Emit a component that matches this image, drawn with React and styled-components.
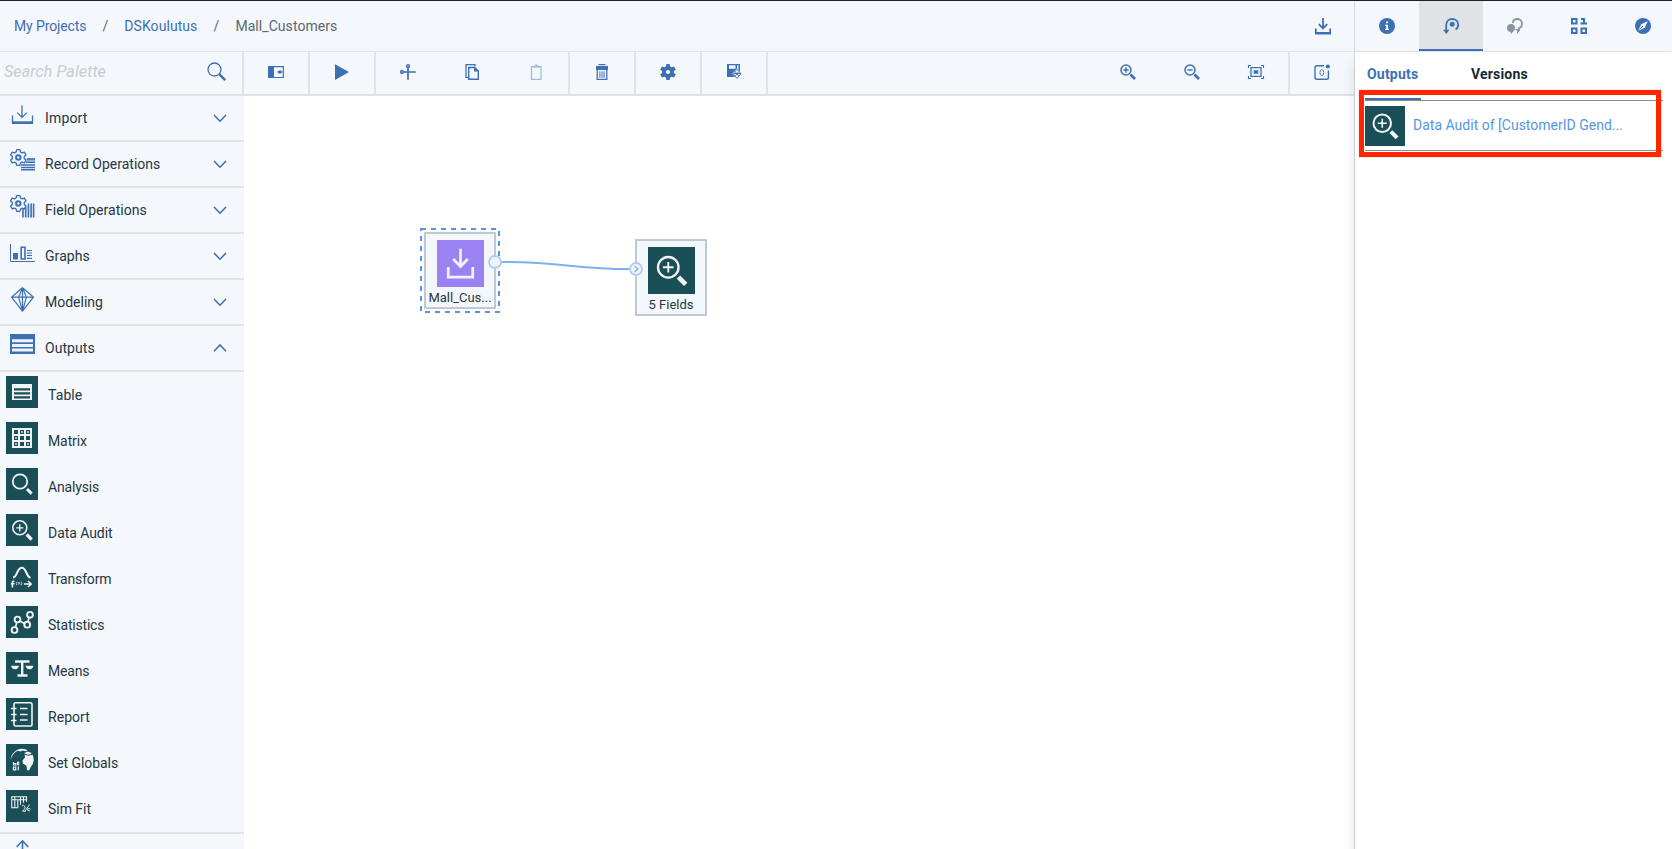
import React from "react";
import styled, { createGlobalStyle } from "styled-components";

const c = {
  blue: "#3d70b2",
  bg: "#f4f7fb",
  line: "#dfe3e6",
  teal: "#1a4f57",
  ink: "#152935",
  text: "#253741",
};

const Global = createGlobalStyle`
  * { box-sizing: border-box; }
  body { margin: 0; overflow: hidden; background: #fff; font-family: Roboto, "Liberation Sans", sans-serif; color: ${c.text}; }
`;
const Page = styled.div`display: flex; width: 1672px; height: 849px; border-top: 1px solid #152434; overflow: hidden;`;
const Main = styled.div`flex: 1; min-width: 0; display: flex; flex-direction: column;`;
const Header = styled.header`
  height: 51px; flex: none; display: flex; align-items: center; justify-content: space-between;
  background: ${c.bg}; border-bottom: 1px solid #dfe2e6; padding: 0 22px 0 14px;
`;
const Crumbs = styled.nav`display: flex; align-items: center; padding-bottom: 1px;`;
const Crumb = styled.span`font-size: 14px; line-height: 20px; color: ${(p) => (p.$link ? c.blue : "#5a6872")}; letter-spacing: ${(p) => p.$ls}px;`;
const Slash = styled.span`font-size: 14px; line-height: 20px; color: #5a6872; width: 38px; text-align: center;`;
const Body = styled.div`flex: 1; display: flex; min-height: 0;`;
const Side = styled.aside`width: 244px; flex: none; background: ${c.bg}; overflow: hidden;`;
const Search = styled.div`
  height: 44px; border-right: 2px solid ${c.line}; border-bottom: 2px solid ${c.line};
  display: flex; align-items: center; justify-content: space-between; padding: 0 15px 4px 4px;
`;
const SearchText = styled.span`
  font-size: 16px; line-height: 20px; font-style: italic; letter-spacing: 0.13px; color: #c8cccf; padding-top: 1px;
`;
const Category = styled.div`
  height: 46px; border-bottom: 2px solid ${c.line}; display: flex; align-items: center; padding: 0 15px 0 10px;
  svg:first-child { margin: -4px 9px 0 0; }
`;
const Name = styled.span`flex: 1; font-size: 14px; line-height: 20px; letter-spacing: ${(p) => p.$ls}px; white-space: nowrap;`;
const Items = styled.div`border-bottom: 2px solid ${c.line};`;
const Item = styled.div`
  height: 46px; display: flex; align-items: center; padding-left: 6px;
  svg { margin: -6px 10px 0 0; }
`;
const Work = styled.div`flex: 1; display: flex; flex-direction: column; min-width: 0;`;
const Toolbar = styled.div`height: 44px; flex: none; display: flex; background: ${c.bg}; border-bottom: 2px solid ${c.line};`;
const Tool = styled.div`
  width: ${(p) => (p.$div ? 66 : 64)}px; display: flex; align-items: center; justify-content: center;
  border-right: ${(p) => (p.$div ? `2px solid ${c.line}` : "0")}; padding-bottom: 2px;
`;
const Spacer = styled.div`flex: 1;`;
const Canvas = styled.div`flex: 1; position: relative; background: #fff;`;
const Node = styled.div`
  position: absolute; left: ${(p) => p.$x}px; top: ${(p) => p.$y}px; width: 72px; height: 77px;
  border: 2px solid #c0c9d1; background: ${c.bg}; display: flex; flex-direction: column; align-items: center; padding-top: 6px;
`;
const NodeLabel = styled.span`font-size: 13px; line-height: 18px; margin-top: 2px; white-space: nowrap;`;
const Overlay = styled.svg`position: absolute; left: 0; top: 0;`;
const Panel = styled.aside`
  width: 318px; flex: none; background: #fff; border-left: 1px solid #d5d9dd; position: relative;
  display: flex; flex-direction: column;
`;
const PanelBody = styled.div`flex: 1; background: #fff; box-shadow: -2px 10px 13px rgba(0, 20, 20, 0.09);`;
const Tabs = styled.div`display: flex; width: 320px; height: 51px; flex: none; background: ${c.bg}; border-bottom: 1px solid #dfe2e6;`;
const Tab = styled.div`
  width: 64px; height: 50px; display: flex; align-items: center; justify-content: center; padding-top: 2px;
  background: ${(p) => (p.$on ? "#dfe3e6" : "transparent")}; border-bottom: 2px solid ${(p) => (p.$on ? c.blue : "transparent")};
`;
const SubTabs = styled.div`display: flex; height: 48px; padding-left: 10px; gap: 48px;`;
const SubTab = styled.div`
  width: 56px; padding: 12px 0 0 2px; font-size: 14px; line-height: 20px; font-weight: 700; letter-spacing: ${(p) => p.$ls}px;
  white-space: nowrap;
  color: ${(p) => (p.$on ? c.blue : c.ink)}; border-bottom: 2px solid ${(p) => (p.$on ? c.blue : "transparent")};
`;
const Result = styled.div`
  margin-left: 10px; width: 298px; height: 51px; border-top: 1px solid #868b90; border-bottom: 1px solid #868b90;
  display: flex; align-items: center; gap: 8px; color: #5596e6;
  span { padding-bottom: 1px; }
`;
const Highlight = styled.div`
  position: absolute; left: 4px; top: 89px; width: 302px; height: 67px; border: 5px solid #ff2600;
  box-shadow: 0 0 1px #ff7a62;
`;

const g = { fill: "none", stroke: c.blue };
const Svg = ({ s = 16, w, h, vb, children }) => (
  <svg width={w || s} height={h || s} viewBox={vb || `0 0 ${w || s} ${h || s}`} fill="none" stroke="none" overflow="visible">{children}</svg>
);

const gearPoints = (cx, cy, ro, ri, n) => {
  const pts = [];
  const step = Math.PI / n;
  for (let i = 0; i < n; i++) {
    [[-0.7, ri], [-0.38, ro], [0.38, ro], [0.7, ri]].forEach(([k, r]) => {
      const t = i * 2 * step + k * step;
      pts.push(`${(cx + r * Math.sin(t)).toFixed(2)},${(cy - r * Math.cos(t)).toFixed(2)}`);
    });
  }
  return pts.join(" ");
};

const Chevron = ({ up }) => (
  <Svg w={18} h={12}>
    <path d={up ? "M3 9.2 9 3l6 6.2" : "M3 3l6 6.2L15 3"} {...g} strokeWidth="1.6" />
  </Svg>
);

const SmallGear = () => (
  <>
    <polygon points={gearPoints(8.3, 8.5, 8.1, 6, 6)} {...g} strokeWidth="1.3" strokeLinejoin="round" />
    <circle cx="8.3" cy="8.5" r="2.2" {...g} strokeWidth="2" />
  </>
);

const catIcons = {
  Import: (
    <>
      <path d="M12 2.5V14M7.2 9.6l4.8 4.8 4.8-4.8M2.5 12.5V20M22.5 12.5V20" {...g} strokeWidth="1.3" />
      <path d="M2 18.3h21V21H2z" fill={c.blue} />
    </>
  ),
  Record: (
    <>
      <SmallGear />
      <path d="M16 9.5h9v3h-9z" fill="#9cb7dc" />
      <path d="M17 10h8M16 13.3h9M11 16h14M11 18.5h14M11 20.8h14" {...g} strokeWidth="1.6" />
    </>
  ),
  Field: (
    <>
      <SmallGear />
      <path d="M13 14v8.5M15.7 12v10.5M18.4 8.5v14M21.1 8.5v14M23.6 8.5v14" {...g} strokeWidth="1.6" />
    </>
  ),
  Graphs: (
    <>
      <path d="M.5 3v17.5H25" {...g} strokeWidth="1" />
      <path d="M3 12h5v6.5H3z" fill={c.blue} />
      <path d="M11.2 6.2h3.8v11.8h-3.8z" {...g} strokeWidth="1.6" />
      <path d="M17 9.5h5M17 12h5M17 14.5h5M17 17.3h5" {...g} strokeWidth="1.2" />
    </>
  ),
  Modeling: (
    <path d="M12.5.8 1.5 10.2l11 14 11-14zM1.5 10.2h22M12.5.8 8.6 10.2l3.9 14 3.9-14zM12.5 1v23" {...g} strokeWidth="1.2" strokeLinejoin="round" />
  ),
  Outputs: (
    <>
      <path d="M0 1h25v20H0z" fill={c.blue} />
      <path d="M2 6.2h21v3H2zM2 10.9h21v3H2zM2 15.6h21v3H2z" fill="#eef3fb" />
    </>
  ),
  Next: <path d="M12.5 0V12M6.7 6 12.5-.2 18.3 6" {...g} strokeWidth="1.6" />,
};

const W = { stroke: "#f2f3f6", fill: "none" };
const F = { fill: "#f2f3f6" };
const itemIcons = {
  Table: (
    <>
      <path d="M6 8h20v16H6z" {...F} />
      <path d="M8 12.2h16v2.2H8zM8 16.2h16v2.2H8zM8 20.2h16v2.2H8z" fill={c.teal} />
    </>
  ),
  Matrix: (
    <>
      <path d="M6 6h20v20H6z" {...F} />
      {[8, 14, 20].map((y) => [8, 14, 20].map((x) => <rect key={`${x}-${y}`} x={x} y={y} width="4" height="4" fill={c.teal} />))}
      <path d="M21 9h2v2h-2zM15 9h2v2h-2zM9 15h2v2H9zM21 21h2v2h-2zM9 21h2v2H9z" fill="#a9bcc1" />
    </>
  ),
  Analysis: (
    <>
      <circle cx="14" cy="13.5" r="7.2" {...W} strokeWidth="1.8" />
      <path d="M21 21l4.6 4.6" {...W} strokeWidth="3" />
    </>
  ),
  "Data Audit": (
    <>
      <circle cx="13.8" cy="13.8" r="7" {...W} strokeWidth="1.6" />
      <path d="M10.2 13.8h7.2M13.8 10.2v7.2" {...W} strokeWidth="1.3" />
      <path d="M20.7 20.5l5 5" {...W} strokeWidth="3.2" />
    </>
  ),
  Transform: (
    <>
      <path d="M7 17.8c4.5-1 4-10 8.8-10s4.3 9 8.7 10" {...W} strokeWidth="2" />
      <path d="M8.4 21.4c-1.4-.5-2 .2-2 1.4V27.5M4.8 23.8h3.6M18 24h7M22 21l3.2 3L22 27" {...W} strokeWidth="1.6" />
      <path d="M10.8 21.8q-1 1.7 0 3.4M15.4 21.8q1 1.7 0 3.4M12 22l2.2 2.6M14.2 22 12 24.6" {...W} strokeWidth=".7" />
    </>
  ),
  Statistics: (
    <>
      <path d="M9.5 21.5l1.3-5.5M13.3 14.5l5.7 3.5M21.8 16l1.4-4.500" {...W} strokeWidth="1.6" />
      {[[8.5, 24], [11.5, 13.5], [21.2, 18.7], [24, 8.8]].map(([x, y]) => (
        <circle key={x} cx={x} cy={y} r="2.9" {...W} strokeWidth="1.9" />
      ))}
    </>
  ),
  Means: (
    <>
      <path d="M9 9.5h14.5M16.2 9v15M11.5 23.5h10" {...W} strokeWidth="2.4" />
      <path d="M5 13.7h8q-1 3.5-4 3.5T5 13.7zM19.5 13.7h8q-1 3.5-4 3.5t-4-3.5z" {...F} />
    </>
  ),
  Report: (
    <>
      <rect x="8" y="4.8" width="18" height="23.2" rx="1.5" {...W} strokeWidth="1.6" />
      <path d="M5 10.5h5.5M5 16.5h5.5M5 22.5h5.5M14 10.5h7.5M14 16.5h7.5M14 22h7.5" {...W} strokeWidth="1.7" />
    </>
  ),
  "Set Globals": (
    <>
      <path d="M4.5 15.5C5.5 9 10.5 4.8 16 4.8c2.5 0 4.5.8 5.5 1.8l-2 .6-3-.8-2 1-2.5-.6c-3 1-5.500 4-7.500 8.700z" {...F} />
      <path d="M18.5 9l3-1.5 3 1 2.500 3 .8 4.500-1 4-2.500 3.800-1.300 2.800-2-.5-.6-4.500-3.500-1.800-.4-3.200 2.500-3z" {...F} />
      <path d="M17 9.8l5 1.4 4-.8" stroke={c.teal} strokeWidth="1" />
      <path d="M7.5 18v3h2.300v-1.500H7.500M7.500 23h2.300v2.800H7.500zM12.300 22.500v3.700" {...W} strokeWidth="1.200" />
      <path d="M11.500 18v3h1.300v-3z" {...W} strokeWidth="1" />
    </>
  ),
  "Sim Fit": (
    <>
      <path d="M5.8 6.8h14.7v3H5.8zM5.8 9.8v8h6v-8M8.8 6.8v11M14.5 6.8v8M17.5 6.8v6M20.5 9.8v2" {...W} strokeWidth="1.1" />
      <path d="M16 16q1.5-1.5 2.8.3t-.8 3.2l-1.5 1.7h3.2M23.7 14.5l-5 7M21.5 19q2-1 3 0M21.5 19q-.5 2 2.5 2" {...W} strokeWidth=".9" />
    </>
  ),
};

const ItemIcon = ({ name, size = 32 }) => (
  <Svg s={size} vb="0 0 32 32">
    <path d="M0 0h32v32H0z" fill={c.teal} />
    {itemIcons[name]}
  </Svg>
);

const B = { fill: c.blue };
const Magnifier = ({ plus }) => (
  <Svg>
    <circle cx="6" cy="6" r="5" {...g} strokeWidth="1.5" />
    <path d={plus ? "M3.300 6h5.400M6 3.300v5.400" : "M3.300 6h5.400"} {...g} strokeWidth="1.4" />
    <path d="M10.5 10.5l4.5 4.5" {...g} strokeWidth="2.6" />
  </Svg>
);
const tools = {
  toggle: (<Svg><path d="M.7 2.7h14.6v10.800H.7z" {...g} strokeWidth="1.2" /><path d="M0 2h6v12H0z" {...B} /><path d="M10 8h4.2" {...g} strokeWidth="1.8" /><path d="M12.5 5.700v4.600L9 8z" {...B} /></Svg>),
  play: (<Svg><path d="M1 .2v15.800L15 8z" {...B} /></Svg>),
  cut: (<Svg><circle cx="8" cy="2.2" r="1.5" fill="#9cb7dc" stroke={c.blue} strokeWidth="1.3" /><circle cx="2" cy="8" r="1.5" fill="#9cb7dc" stroke={c.blue} strokeWidth="1.3" /><path d="M8 3.700V15.800M3.500 8h12.300" {...g} strokeWidth="1.700" /></Svg>),
  copy: (<Svg><path d="M4.500 13.300H2V.6h9v2" {...g} strokeWidth="1.3" /><path d="M4.700 3.500h6l3.600 3.600v8.200H4.700z" {...g} strokeWidth="1.4" /><path d="M10 3v4.600h4.600z" {...B} /></Svg>),
  paste: (<Svg><path d="M3.500 2.600h9.500v12.800H3.500z" stroke="#9dbae1" strokeWidth="1.2" /><path d="M5.500 3.500V1.800H7L7.600.5h1.800l.6 1.300h1.500v1.700z" fill="#9dbae1" /></Svg>),
  trash: (<Svg><path d="M4.500 0h7v1.300h-7zM2 2h12v4H2z" {...B} /><path d="M3.200 6v9.300h9.600V6" {...g} strokeWidth="1.3" /><path d="M5.900 7.300v6.500M8 7.300v6.500M10.100 7.300v6.500" {...g} strokeWidth="1" /></Svg>),
  gear: (<Svg><polygon points={gearPoints(8, 8, 8.2, 6, 6)} {...B} /><circle cx="8" cy="8" r="2.1" fill={c.bg} /></Svg>),
  save: (<Svg><path d="M1 0h13v7.500L9.500 13H1z" {...B} /><path d="M3 1.300h6.500v3.500H3zM11 1.300h1.500v4.500H11z" fill={c.bg} /><path d="M11 4.800l4.800 4.800-4.800 5.400L6 9.600z" fill={c.bg} /><path d="M11 5.500l4 4-4 5-4-5zM7 9.500h8M9.200 7.500l3.500 4.500M12.800 7.500l-3.500 4.500" {...g} strokeWidth=".9" /></Svg>),
  fit: (<Svg><path d="M.5 4V1.500H3M13 1.500h2.500V4M15.500 12v2.500H13M3 14.500H.5V12" {...g} strokeWidth="1.1" /><path d="M3 3.600h10v8.800H3z" {...g} strokeWidth="1.3" /><path d="M5.700 6.200h4.600v3.600H5.700z" {...B} /></Svg>),
  note: (<Svg><path d="M10 1.800H2.800Q1 1.800 1 3.600v9.800q0 1.800 1.800 1.800h9.800q1.800 0 1.800-1.800V6.500" {...g} strokeWidth="1.4" /><circle cx="13.8" cy="2.5" r="2.1" {...B} /><ellipse cx="7.8" cy="8.6" rx="1.9" ry="3" {...g} strokeWidth=".9" /></Svg>),
  download: (<Svg w={18} h={18}><path d="M9 1v10M4.800 7.200 9 11.500 13.200 7.200M1.800 11.500v5M16.200 11.500v5" {...g} strokeWidth="1.8" /><path d="M1 15h16v2.500H1z" {...B} /></Svg>),
};

const tabIcons = [
  <Svg><circle cx="8" cy="8" r="8" {...B} /><path d="M7 3.500h2v1.800H7zM6.200 6.800H9v4h1V12H6v-1.200h1.200V8H6.200z" fill="#fff" /></Svg>,
  <Svg><circle cx="9.2" cy="6.3" r="2.5" {...B} /><path d="M3.200 14V7.200C3.200 3.500 5.700 1 9.200 1s6 2.500 6 5.700c0 2-1 3.700-2.600 4.700" {...g} strokeWidth="1.8" /><path d="M0 11.700h6.500L3.300 16z" {...B} /></Svg>,
  <Svg><path d="M5.600 5C6 2.600 7.800 1 10.300 1 13 1 15 3 15 5.800c0 2.700-1.700 4.300-4 4.900" stroke="#8897a2" strokeWidth="1.8" /><circle cx="4" cy="10" r="4" fill="#8897a2" /><path d="M2.500 12.500h4L4.500 16zM7.500 11h5.500v1.500L10 16V12.500z" fill="#8897a2" /></Svg>,
  <Svg><path d="M1 1h4.500v4.500H1zM1 10.500h4.500V15H1zM10.500 10.500H15V15h-4.500z" {...g} strokeWidth="2" /><path d="M10 1h3v5M9.500 5.500H16" {...g} strokeWidth="2" /></Svg>,
  <Svg><circle cx="8" cy="8" r="8" {...B} /><path d="M12.700 3.300L9.800 9.800 3.300 12.700 6.200 6.200z" fill="#fff" /><path d="M4.500 11.500L8 8" {...g} strokeWidth="1" /></Svg>,
];

const categories = [
  ["Import", "Import", 0.15], ["Record Operations", "Record", 0], ["Field Operations", "Field", 0.03],
  ["Graphs", "Graphs", 0.08], ["Modeling", "Modeling", -0.01], ["Outputs", "Outputs", 0.05],
];
const items = [
  ["Table", 0.1], ["Matrix", -0.1], ["Analysis", -0.15], ["Data Audit", -0.06], ["Transform", -0.15],
  ["Statistics", -0.2], ["Means", -0.2], ["Report", 0.04], ["Set Globals", -0.07], ["Sim Fit", -0.03],
];

export default function App() {
  return (
    <Page>
      <Global />
      <Main>
        <Header>
          <Crumbs>
            <Crumb $link $ls={-0.12}>My Projects</Crumb><Slash>/</Slash>
            <Crumb $link $ls={0.06}>DSKoulutus</Crumb><Slash>/</Slash>
            <Crumb $ls={0.06}>Mall_Customers</Crumb>
          </Crumbs>
          {tools.download}
        </Header>
        <Body>
          <Side>
            <Search>
              <SearchText>Search Palette</SearchText>
              <Svg s={22}><circle cx="9.5" cy="9.5" r="6.5" {...g} strokeWidth="1.3" /><path d="M14.2 14.2l6 6" {...g} strokeWidth="2.4" /></Svg>
            </Search>
            {categories.map(([name, icon, ls]) => (
              <Category key={name}>
                <Svg s={26}>{catIcons[icon]}</Svg>
                <Name $ls={ls}>{name}</Name>
                <Chevron up={name === "Outputs"} />
              </Category>
            ))}
            <Items>
              {items.map(([name, ls]) => (
                <Item key={name}><ItemIcon name={name} /><Name $ls={ls}>{name}</Name></Item>
              ))}
            </Items>
            <Category><Svg s={26}>{catIcons.Next}</Svg></Category>
          </Side>
          <Work>
            <Toolbar>
              <Tool $div>{tools.toggle}</Tool>
              <Tool $div>{tools.play}</Tool>
              <Tool>{tools.cut}</Tool>
              <Tool>{tools.copy}</Tool>
              <Tool $div>{tools.paste}</Tool>
              <Tool $div>{tools.trash}</Tool>
              <Tool $div>{tools.gear}</Tool>
              <Tool $div>{tools.save}</Tool>
              <Spacer />
              <Tool><Magnifier plus /></Tool>
              <Tool><Magnifier /></Tool>
              <Tool $div>{tools.fit}</Tool>
              <Tool>{tools.note}</Tool>
            </Toolbar>
            <Canvas>
              <Node $x={180} $y={136}>
                <Svg s={47} vb="0 0 48 48"><path d="M0 0h48v48H0z" fill="#9b82f3" /><path d="M24 9v17.500M16.500 19.500l7.500 7.500 7.500-7.500M11.500 27.500V38h25V27.500" stroke="#f2f0fa" strokeWidth="2.800" /></Svg>
                <NodeLabel>Mall_Cus...</NodeLabel>
              </Node>
              <Node $x={391} $y={143}>
                <ItemIcon name="Data Audit" size={47} />
                <NodeLabel>5 Fields</NodeLabel>
              </Node>
              <Overlay width="500" height="300" viewBox="0 0 500 300" fill="none">
                <rect x="177" y="133" width="78" height="83" stroke="#5596e6" strokeWidth="2" strokeDasharray="5 5" />
                <path d="M257 166C320 166 330 173 386 173" stroke="#7db0ef" strokeWidth="2" />
                <circle cx="251" cy="166" r="6" fill="#f0f5fd" stroke="#afcdf4" strokeWidth="1.8" />
                <circle cx="392" cy="173" r="6" fill="#f0f5fd" stroke="#afcdf4" strokeWidth="1.8" />
                <path d="M390.500 170l3.500 3-3.500 3" stroke="#7db0ef" strokeWidth="1.2" />
              </Overlay>
            </Canvas>
          </Work>
        </Body>
      </Main>
      <Panel>
        <Tabs>{tabIcons.map((icon, i) => <Tab key={i} $on={i === 1}>{icon}</Tab>)}</Tabs>
        <PanelBody>
          <SubTabs><SubTab $on $ls={0.2}>Outputs</SubTab><SubTab $ls={0.18}>Versions</SubTab></SubTabs>
          <Result><ItemIcon name="Data Audit" size={40} /><Name $ls={0.01}>Data Audit of [CustomerID Gend...</Name></Result>
        </PanelBody>
        <Highlight />
      </Panel>
    </Page>
  );
}
